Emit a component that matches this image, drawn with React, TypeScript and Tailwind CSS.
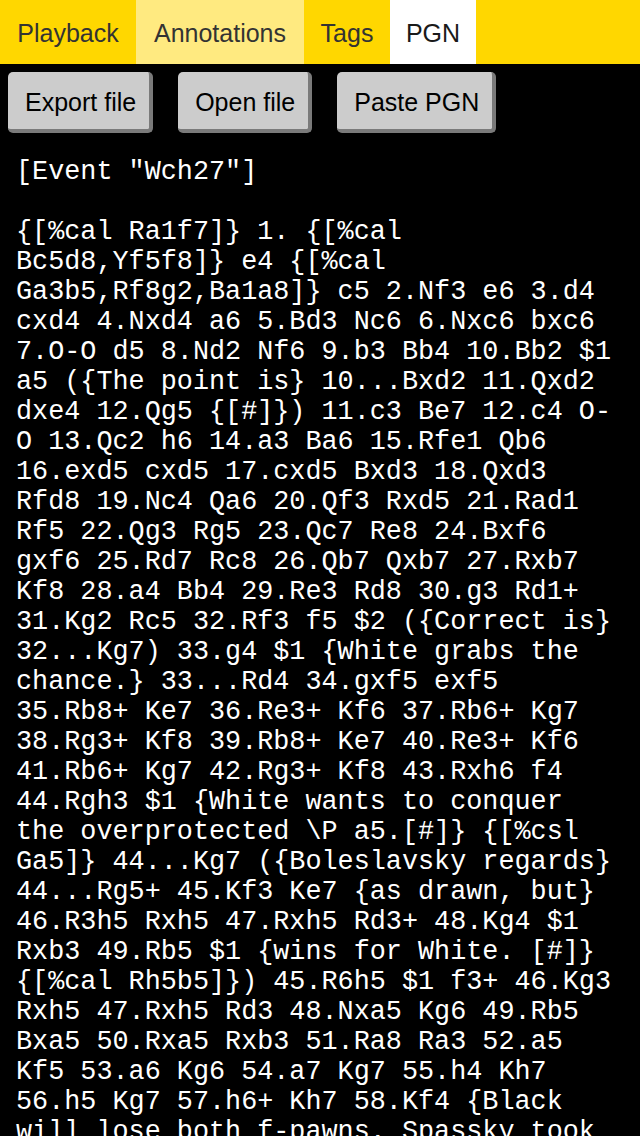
import React from "react";

const TABS = [
  { label: "Playback", w: "w-[136px]", bg: "bg-[#ffd700]", text: "text-[#333333]" },
  { label: "Annotations", w: "w-[168px]", bg: "bg-[#ffea80]", text: "text-[#333333]" },
  { label: "Tags", w: "w-[86px]", bg: "bg-[#ffd700]", text: "text-[#333333]" },
  { label: "PGN", w: "w-[86px]", bg: "bg-white", text: "text-[#1a1a1a]" },
];

const PGN_TEXT = `[Event "Wch27"]

{[%cal Ra1f7]} 1. {[%cal Bc5d8,Yf5f8]} e4 {[%cal Ga3b5,Rf8g2,Ba1a8]} c5 2.Nf3 e6 3.d4 cxd4 4.Nxd4 a6 5.Bd3 Nc6 6.Nxc6 bxc6 7.O-O d5 8.Nd2 Nf6 9.b3 Bb4 10.Bb2 $1 a5 ({The point is} 10...Bxd2 11.Qxd2 dxe4 12.Qg5 {[#]}) 11.c3 Be7 12.c4 O-O 13.Qc2 h6 14.a3 Ba6 15.Rfe1 Qb6 16.exd5 cxd5 17.cxd5 Bxd3 18.Qxd3 Rfd8 19.Nc4 Qa6 20.Qf3 Rxd5 21.Rad1 Rf5 22.Qg3 Rg5 23.Qc7 Re8 24.Bxf6 gxf6 25.Rd7 Rc8 26.Qb7 Qxb7 27.Rxb7 Kf8 28.a4 Bb4 29.Re3 Rd8 30.g3 Rd1+ 31.Kg2 Rc5 32.Rf3 f5 $2 ({Correct is} 32...Kg7) 33.g4 $1 {White grabs the chance.} 33...Rd4 34.gxf5 exf5 35.Rb8+ Ke7 36.Re3+ Kf6 37.Rb6+ Kg7 38.Rg3+ Kf8 39.Rb8+ Ke7 40.Re3+ Kf6 41.Rb6+ Kg7 42.Rg3+ Kf8 43.Rxh6 f4 44.Rgh3 $1 {White wants to conquer the overprotected \\P a5.[#]} {[%csl Ga5]} 44...Kg7 ({Boleslavsky regards} 44...Rg5+ 45.Kf3 Ke7 {as drawn, but} 46.R3h5 Rxh5 47.Rxh5 Rd3+ 48.Kg4 $1 Rxb3 49.Rb5 $1 {wins for White. [#]} {[%cal Rh5b5]}) 45.R6h5 $1 f3+ 46.Kg3 Rxh5 47.Rxh5 Rd3 48.Nxa5 Kg6 49.Rb5 Bxa5 50.Rxa5 Rxb3 51.Ra8 Ra3 52.a5 Kf5 53.a6 Kg6 54.a7 Kg7 55.h4 Kh7 56.h5 Kg7 57.h6+ Kh7 58.Kf4 {Black will lose both f-pawns. Spassky took the a-pawn and then won the game.} 1-0`;

function ActionButton({ label }: { label: string }) {
  return (
    <button className="h-[61px] rounded-[5px] border-r-4 border-b-4 border-[#7a7a7a] bg-[#cccccc] pl-[17px] pr-[13px] pt-[4px] text-[25px] text-black font-['Liberation_Sans',Arial,sans-serif] leading-none">
      {label}
    </button>
  );
}

export default function App() {
  return (
    <div className="h-[1136px] w-[640px] overflow-hidden bg-black">
      {/* Tabs */}
      <div className="flex h-16 bg-[#ffd700]">
        {TABS.map((tab) => (
          <div
            key={tab.label}
            className={`flex h-full items-center justify-center pt-[3px] text-[25px] font-['Liberation_Sans',Arial,sans-serif] ${tab.w} ${tab.bg} ${tab.text}`}
          >
            {tab.label}
          </div>
        ))}
      </div>

      {/* Actions */}
      <div className="flex gap-[25px] pl-2 pt-2">
        <ActionButton label="Export file" />
        <ActionButton label="Open file" />
        <ActionButton label="Paste PGN" />
      </div>

      {/* PGN text */}
      <pre className="mt-[24px] whitespace-pre-wrap break-words px-4 text-[26.8px] leading-[30px] text-white font-['Liberation_Mono',monospace]">
        {PGN_TEXT}
      </pre>
    </div>
  );
}
